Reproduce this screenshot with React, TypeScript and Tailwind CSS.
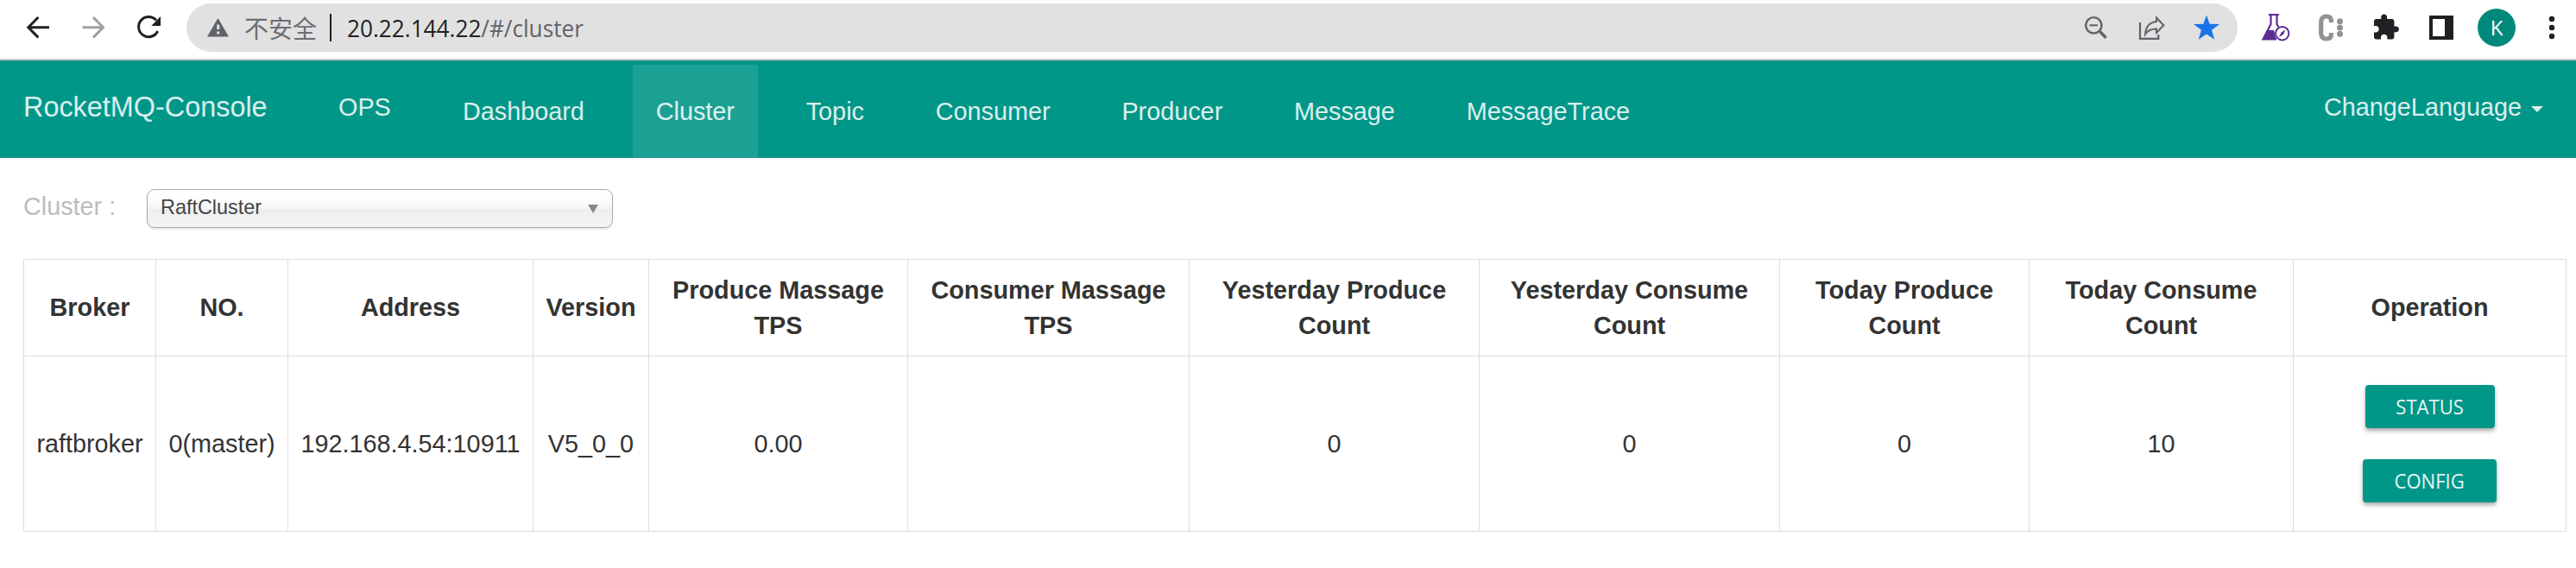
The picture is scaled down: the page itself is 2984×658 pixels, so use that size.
import React from "react";

const navItems = ["Dashboard", "Cluster", "Topic", "Consumer", "Producer", "Message", "MessageTrace"];

const headers = [
  "Broker", "NO.", "Address", "Version", "Produce Massage TPS", "Consumer Massage TPS",
  "Yesterday Produce Count", "Yesterday Consume Count", "Today Produce Count", "Today Consume Count", "Operation",
];

const row = ["raftbroker", "0(master)", "192.168.4.54:10911", "V5_0_0", "0.00", "", "0", "0", "0", "10"];

function BrowserBar() {
  return (
    <div className="flex h-[70px] items-start border-b-2 border-[#c9cbca] bg-white">
      <svg className="h-[64px] w-[216px] shrink-0" viewBox="0 0 216 64" fill="none">
        <path d="M57 31.700H33.500M44.300 20L32.800 31.700L44.300 43.400" stroke="#202124" strokeWidth="3" />
        <path d="M95.500 31.700H119M108 20L119.500 31.700L108 43.400" stroke="#a0a0a0" strokeWidth="3" />
        <path d="M181 23.500A11.600 11.600 0 1 0 182.700 36" stroke="#202124" strokeWidth="3" />
        <path d="M186 19V30H175.300Z" fill="#202124" />
      </svg>
      <div className="mt-1 flex h-14 w-[2376px] shrink-0 items-center rounded-full bg-[#e1e1e1]">
        <svg className="ml-[24px] h-[22px] w-[26px]" viewBox="0 0 26 22">
          <path d="M12.500 0L25 21.500H0Z" fill="#5f6368" />
          <path d="M11.200 7.500h3v5.500h-3zM11.200 15.500h3v3h-3z" fill="#e1e1e1" />
        </svg>
        <span className="ml-[17px] w-[85px] whitespace-nowrap font-['Noto_Sans_CJK_SC',sans-serif] text-[28px] leading-[40px] text-[#6b6e72]">不安全</span>
        <span className="ml-[14px] h-8 w-[2px] bg-[#202124]" />
        <span className="ml-[18px] inline-block w-[1000px] origin-left scale-x-[0.935] whitespace-nowrap font-['Open_Sans',sans-serif] text-[28px] leading-[40px] text-[#5f6368]">
          <span className="text-[#202124]">20.22.144.22</span>/#/cluster
        </span>
        <svg className="ml-auto h-14 w-[192px] shrink-0" viewBox="2400 4 192 56" fill="none">
          <circle cx="2425.3" cy="29.300" r="9.200" stroke="#5f6368" strokeWidth="2.400" />
          <path d="M2420.500 29.300h9.600" stroke="#5f6368" strokeWidth="2" />
          <path d="M2432.500 36.500l7 7.200" stroke="#5f6368" strokeWidth="3.500" />
          <path d="M2479 26V44.800H2500.300V40" stroke="#5f6368" strokeWidth="2.200" />
          <path d="M2498 20.500L2506.300 29.300L2498 38V33.500C2491.500 33.300 2488 35 2485 39.500C2485.500 31.500 2490 25.500 2498 25Z" stroke="#5f6368" strokeWidth="2" />
          <path d="M2556 17.500l3.600 10.200 11.400.4-9 6.600 3.300 11-9.300-6.300-9.300 6.300 3.300-11-9-6.600 11.400-.4z" fill="#1a73e8" />
        </svg>
      </div>
      <svg className="h-[64px] w-[392px] shrink-0" viewBox="2592 0 392 64" fill="none">
        <path d="M2628 17H2640M2630.500 17V28L2621.500 45.500H2637M2637.500 17V28L2639.500 31.500" stroke="#5c2d91" strokeWidth="2.200" />
        <path d="M2626.500 35H2634L2637 46H2620.500Z" fill="#5c2d91" />
        <circle cx="2643.700" cy="38.700" r="8.900" fill="#fff" />
        <circle cx="2643.700" cy="38.700" r="7.700" fill="#fff" stroke="#5c2d91" strokeWidth="2" />
        <path d="M2647.500 34.500L2644.900 40L2640 43L2642.500 37.500Z" fill="#5c2d91" />
        <path d="M2700.500 26V24.500C2700.500 21 2698.500 19 2695 19C2690.500 19 2688.700 22 2688.700 26V38.500C2688.700 42.500 2690.500 45 2695 45C2698.500 45 2700.500 43 2700.500 39.500V38" stroke="#929292" strokeWidth="5.200" />
        <g fill="#929292"><circle cx="2710.500" cy="24.700" r="3.500" /><circle cx="2710.500" cy="32" r="3.500" /><circle cx="2710.500" cy="39.300" r="3.500" /></g>
        <path transform="translate(2747.200 15.200) scale(1.38)" d="M20.5 11H19V7c0-1.1-.9-2-2-2h-4V3.5C13 2.12 11.88 1 10.5 1S8 2.120 8 3.5V5H4c-1.1 0-1.990.9-1.990 2v3.800H3.500c1.490 0 2.700 1.210 2.700 2.700s-1.210 2.700-2.700 2.700H2V20c0 1.100.9 2 2 2h3.800v-1.500c0-1.490 1.210-2.700 2.700-2.700 1.490 0 2.700 1.210 2.700 2.700V22H17c1.100 0 2-.9 2-2v-4h1.500c1.380 0 2.500-1.120 2.500-2.500S21.880 11 20.500 11z" fill="#202124" />
        <path d="M2814 18h28v28h-28zM2818 22v20h14v-20z" fill="#202124" fillRule="evenodd" />
        <circle cx="2892" cy="32" r="22" fill="#00897b" />
        <text x="2892" y="40.500" textAnchor="middle" fill="#fff" fontFamily="Open Sans, sans-serif" fontSize="24">K</text>
        <g fill="#202124"><circle cx="2956" cy="22" r="3.200" /><circle cx="2956" cy="32" r="3.200" /><circle cx="2956" cy="42" r="3.200" /></g>
      </svg>
    </div>
  );
}

function NavBar() {
  return (
    <nav className="flex h-[113px] items-start border-b border-[#1c8b80] bg-[#009688] text-[28.8px] leading-[36px] text-white/85">
      <a className="ml-[27px] mt-[36px] w-[365px] whitespace-nowrap text-[32.4px]">RocketMQ-Console</a>
      <a className="mt-[36px] w-[117px]">OPS</a>
      <ul className="mt-[5px] flex gap-[28.8px]">
        {navItems.map((item) => (
          <li key={item} className={"h-[108px] px-[27px] pt-[36px] " + (item === "Cluster" ? "bg-white/10" : "")}>{item}</li>
        ))}
      </ul>
      <a className="ml-auto mr-[38px] mt-[36px] flex">
        ChangeLanguage
        <svg className="ml-[11px] mt-[17px] h-[7px] w-[14px]" viewBox="0 0 14 7"><path d="M0 0H14L7 7Z" fill="currentColor" /></svg>
      </a>
    </nav>
  );
}

function ActionButton({ label, className }: { label: string; className: string }) {
  return (
    <button className={"flex h-[50px] items-center justify-center rounded-[4px] bg-[#009688] pb-[2px] font-['Open_Sans',sans-serif] text-[24.5px] text-white/90 shadow-[0_3px_5px_rgba(0,0,0,0.35)] " + className}>
      <span className="inline-block scale-x-[0.9]">{label}</span>
    </button>
  );
}

export default function App() {
  return (
    <div className="h-[658px] w-[2984px] overflow-hidden bg-white font-['Liberation_Sans',Arial,sans-serif] text-[#333]">
      <BrowserBar />
      <NavBar />
      <div className="flex h-[117px] items-start pl-[27px] pt-9">
        <label className="w-[143px] text-[28.8px] leading-[40px] text-[#bdbdbd]">Cluster :</label>
        <div className="flex h-[45px] w-[540px] items-center justify-between rounded-[9px] border border-[#aaa] bg-[linear-gradient(#fff_20%,#f6f6f6_50%,#eee_52%,#f4f4f4_100%)] pl-[15px] pr-[16px] text-[23.4px] text-[#444] shadow-[0_2px_2px_rgba(0,0,0,0.1)]">
          <span className="pb-[1px]">RaftCluster</span>
          <svg className="h-[10px] w-[12px]" viewBox="0 0 12 10"><path d="M0 0H12L6 10Z" fill="#888" /></svg>
        </div>
      </div>
      <div className="ml-[27px] grid w-[2946px] grid-cols-[153px_153px_284px_134px_300px_326px_336px_348px_289px_306px_316px] grid-rows-[112px_203px] border-l border-t border-[#ddd] text-center text-[28.8px] leading-[41px]">
        {headers.map((h) => (
          <div key={h} className="flex items-center justify-center border-b border-r border-[#ddd] px-[13px] font-bold">{h}</div>
        ))}
        {row.map((v, i) => (
          <div key={i} className="flex items-center justify-center border-b border-r border-[#ddd]">{v}</div>
        ))}
        <div className="flex flex-col items-center justify-center gap-9 border-b border-r border-[#ddd]">
          <ActionButton label="STATUS" className="w-[150px]" />
          <ActionButton label="CONFIG" className="w-[155px]" />
        </div>
      </div>
    </div>
  );
}
